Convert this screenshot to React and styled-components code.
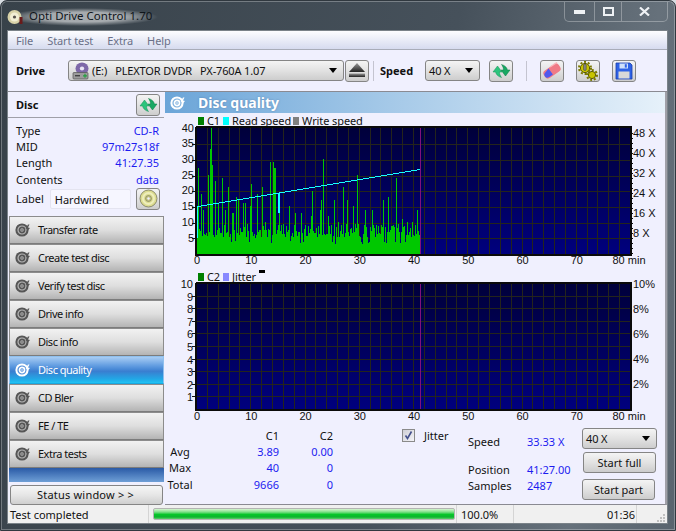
import React from "react";
import styled, { createGlobalStyle } from "styled-components";

const GlobalStyle = createGlobalStyle`
  html, body { margin: 0; padding: 0; background: #d8dde2; }
  * { box-sizing: border-box; }
  body { font-family: "Noto Sans", "Open Sans", "Liberation Sans", sans-serif; font-size: 11px; color: #111; }
`;

const BLUE = "#1c1cf0";

const Window = styled.div`
  width: 676px;
  height: 531px;
  display: flex;
  flex-direction: column;
  padding: 0 7px 6px 6px;
  overflow: hidden;
  border: 1px solid #30383f;
  border-radius: 7px 7px 0 0;
  background: linear-gradient(100deg, #38424a 0%, #46515b 60%, #66717b 86%, #59646e 100%);
  box-shadow: inset 0 0 0 1px rgba(255, 255, 255, 0.28);
`;

const TitleBar = styled.div`
  height: 29px;
  flex: none;
  display: flex;
  align-items: flex-start;
`;

const Caption = styled.div`
  margin: 7px 0 0 0;
  font-size: 11.5px;
  line-height: 16px;
  color: #10151a;
  display: flex;
  gap: 5px;
  background: radial-gradient(closest-side, rgba(255, 255, 255, 0.55) 55%, rgba(255, 255, 255, 0));
  padding: 0 6px 0 0;
`;

const CaptionGroup = styled.div`
  margin-left: auto;
  margin-right: 0;
  margin-top: 1px;
  height: 20px;
  width: 104px;
  display: flex;
  border: 1px solid rgba(255, 255, 255, 0.3);
  border-top: 0;
  border-radius: 0 0 5px 5px;
`;

const CaptionButton = styled.div`
  width: ${(p) => p.$w}px;
  display: flex;
  align-items: center;
  justify-content: center;
  border-left: ${(p) => (p.$first ? "0" : "1px solid rgba(255,255,255,.3)")};
`;

const Client = styled.div`
  flex: 1;
  display: flex;
  flex-direction: column;
  min-height: 0;
  background: #f0f0fe;
  border: 1px solid #7a8288;
`;

const MenuBar = styled.div`
  height: 19px;
  flex: none;
  display: flex;
  gap: 14px;
  padding: 0 0 0 8px;
  align-items: center;
  font-size: 11px;
  letter-spacing: -0.1px;
  color: #6a7088;
  background: linear-gradient(#fdfdff, #d6dbef);
  border-bottom: 1px solid #a8acb8;
`;

const ToolBar = styled.div`
  height: 42px;
  flex: none;
  display: flex;
  align-items: center;
  padding: 0 0 0 8px;
  border-bottom: 1px solid #8a8a92;
`;

const BoldLabel = styled.span`
  font-weight: 700;
  font-size: 11px;
  width: ${(p) => p.$w}px;
  flex: none;
`;

const comboFace = `
  background: linear-gradient(#f4f4f4, #e2e2e2 50%, #cdcdcd);
  border: 1px solid #858585;
  border-radius: 3px;
`;

const Combo = styled.div`
  ${comboFace}
  width: ${(p) => p.$w}px;
  height: ${(p) => p.$h || 21}px;
  flex: none;
  display: flex;
  align-items: center;
  gap: 2px;
  padding: 0 6px 0 3px;
  font-size: 11px;
  letter-spacing: -0.15px;
  white-space: pre;
  margin: ${(p) => p.$m || 0};
`;

const Arrow = styled.span`
  margin-left: auto;
  width: 0;
  height: 0;
  border-left: 4.5px solid transparent;
  border-right: 4.5px solid transparent;
  border-top: 5px solid #000;
`;

const ToolButton = styled.div`
  ${comboFace}
  width: 24px;
  height: 22px;
  flex: none;
  display: flex;
  align-items: center;
  justify-content: center;
  margin: ${(p) => p.$m || 0};
`;

const ToolSep = styled.div`
  width: 1px;
  height: 20px;
  flex: none;
  background: #c4c4d0;
  margin: ${(p) => p.$m};
`;

const Body = styled.div`
  flex: 1;
  min-height: 0;
  display: flex;
`;

const Sidebar = styled.div`
  width: 156px;
  flex: none;
  display: flex;
  flex-direction: column;
`;

const DiscHead = styled.div`
  height: 26px;
  flex: none;
  display: flex;
  align-items: center;
  justify-content: space-between;
  padding: 0 4px 0 8px;
  margin-bottom: 4px;
  border-bottom: 1px solid #a0a0a8;
`;

const InfoRow = styled.div`
  height: 16.4px;
  display: flex;
  align-items: center;
  justify-content: space-between;
  padding: 0 5px 0 8px;
`;

const InfoValue = styled.span`
  color: ${BLUE};
`;

const LabelRow = styled.div`
  height: 24px;
  margin-top: -1px;
  display: flex;
  align-items: center;
  padding: 0 4px 0 8px;
`;

const LabelInput = styled.div`
  width: 81px;
  height: 20px;
  margin-left: 6px;
  padding-left: 4px;
  line-height: 19px;
  background: #f6f6ff;
  border: 1px solid #e4e4f0;
  border-radius: 2px;
`;

const Nav = styled.div`
  margin: 5px 0 0 1px;
  display: flex;
  flex-direction: column;
`;

const NavItem = styled.div`
  height: 28px;
  display: flex;
  align-items: center;
  gap: 7px;
  padding-left: 5px;
  font-size: 11px;
  letter-spacing: -0.5px;
  color: ${(p) => (p.$active ? "#fff" : "#111")};
  border: 1px solid ${(p) => (p.$active ? "#8fc0ee" : "#8c8c8c")};
  border-bottom-color: ${(p) => (p.$active ? "#18a8e0" : "#7c7c7c")};
  background: ${(p) =>
    p.$active
      ? "linear-gradient(#a8cdf4, #5f9be0 35%, #3a7ed0 55%, #22a8e6 85%, #20c4f4)"
      : "linear-gradient(#f2f2f2, #dedede 50%, #b4b4b4)"};
`;

const NavStrip = styled.div`
  height: 14px;
  flex: none;
  margin-left: 1px;
  background: linear-gradient(#2a5aa6, #6f9fd6);
`;

const StatusButton = styled.div`
  ${comboFace}
  height: 20px;
  margin: 3px 1px 0 2px;
  padding-right: 2px;
  text-align: center;
  line-height: 18px;
  letter-spacing: 0.2px;
  background: linear-gradient(#f6f6f6, #e6e6e6 50%, #cfcfcf);
`;

const Main = styled.div`
  flex: 1;
  margin-left: 1px;
  min-width: 0;
  display: flex;
  flex-direction: column;
  border-bottom: 1px solid #8a8a92;
  border-right: 2px solid #a0a0a8;
`;

const PanelHead = styled.div`
  height: 21px;
  flex: none;
  display: flex;
  align-items: center;
  gap: 12px;
  padding-left: 5px;
  font-size: 14px;
  font-weight: 700;
  color: #fff;
  text-shadow: 0 0 2px rgba(60, 100, 150, 0.6);
  background: linear-gradient(90deg, #6ba5d8, #a5c9e8 45%, #e6f1fa);
`;

const Legend = styled.div`
  height: ${(p) => p.$h}px;
  flex: none;
  display: flex;
  align-items: center;
  padding: ${(p) => p.$pt || 0}px 0 0 33px;
  font-size: 11px;
  line-height: 12px;
  letter-spacing: -0.1px;
`;

const Swatch = styled.span`
  width: 6px;
  height: 8px;
  flex: none;
  margin: 0 3px 0 ${(p) => p.$gap || 0}px;
  background: ${(p) => p.$color};
`;

const Dash = styled.span`
  width: 6px;
  height: 3px;
  margin: 0 0 10px 3px;
  background: #000;
`;

const Chart = styled.svg`
  display: block;
  flex: none;
  overflow: visible;
  font-family: "Liberation Sans", Arial, sans-serif;
  font-size: 11px;
`;

const StatsRow = styled.div`
  flex: 1;
  display: flex;
`;

const StatTable = styled.div`
  width: 168px;
  flex: none;
  padding-top: 3px;
  display: grid;
  grid-template-columns: 30px 84px 54px;
  grid-template-rows: 15.5px repeat(3, 16.3px);
  align-items: center;
`;

const StatLabel = styled.span`
  text-align: center;
`;

const StatCell = styled.span`
  text-align: right;
  color: ${(p) => (p.$blue ? BLUE : "#111")};
`;

const JitterBox = styled.div`
  width: 135px;
  flex: none;
  padding: 4px 0 0 69px;
  display: flex;
  gap: 9px;
  align-items: flex-start;
  line-height: 14px;
`;

const Check = styled.span`
  width: 13px;
  height: 13px;
  flex: none;
  display: flex;
  align-items: center;
  justify-content: center;
  border: 1px solid #8a8a8a;
  background: linear-gradient(135deg, #cfcfd6, #f4f4f8);
`;

const SpeedInfo = styled.div`
  width: 114px;
  flex: none;
  padding-top: 8px;
  display: grid;
  grid-template-columns: 59px 1fr;
  grid-template-rows: 16px 12px 16px 16px;
  align-items: center;
`;

const SpeedGap = styled.div`
  grid-column: 1 / 3;
`;

const ButtonCol = styled.div`
  padding-top: 3px;
  display: flex;
  flex-direction: column;
  align-items: flex-start;
`;

const StartButton = styled.div`
  ${comboFace}
  width: ${(p) => p.$w}px;
  height: 21px;
  margin: ${(p) => p.$m};
  text-align: center;
  line-height: 19px;
`;

const StatusBar = styled.div`
  height: 18px;
  flex: none;
  display: flex;
  align-items: center;
  background: #f0f0f0;
`;

const StatusCell = styled.div`
  width: ${(p) => p.$w}px;
  flex: none;
  height: 100%;
  display: flex;
  align-items: center;
  padding: 0 1px 0 ${(p) => p.$pl || 2}px;
  justify-content: ${(p) => (p.$right ? "flex-end" : "flex-start")};
  border-right: 1px solid #d4d4d4;
`;

const Progress = styled.div`
  width: 302px;
  height: 12px;
  border: 1px solid #b4b4b4;
  border-radius: 2px;
  background: linear-gradient(#d6f5d0, #7fe08a 30%, #06c62a 55%, #0bb52e 80%, #5fcf6c);
`;

const Grip = styled.svg`
  margin-left: auto;
  margin-right: 1px;
  align-self: flex-end;
`;

// icons
const DiscIcon = ({ color = "#565656", hole = "#b8b8b8" }) => (
  <svg width="16" height="16" viewBox="0 0 16 16">
    <circle cx="7" cy="8" r="6.6" fill={color} />
    <circle cx="7" cy="8" r="4" fill="none" stroke={hole} strokeWidth="1.2" />
    <circle cx="7" cy="8" r="1.7" fill={hole} />
    <circle cx="7" cy="8" r=".8" fill={color} />
    <path d="M13 2.5l-2.5 4 2 .5-1.5 3.5 4-4.5-2-.5 1.5-3z" fill={color} />
  </svg>
);

const RefreshIcon = () => (
  <svg width="19" height="17" viewBox="0 0 19 17">
    <path d="M5.5 4L10 10H7.5c0 2 .6 3.6 2 5.5C6 14.5 4 12.5 3.6 10H1z" fill="#2cc47c" stroke="#119055" strokeWidth=".5" />
    <path d="M13.5 14L9 8h2.5c0-2-.6-3.6-2-5.5C13 3.5 15 5.5 15.4 8H18z" fill="#19a863" stroke="#0b7c45" strokeWidth=".5" />
  </svg>
);

const EjectIcon = () => (
  <svg width="18" height="15" viewBox="0 0 18 15">
    <defs>
      <linearGradient id="ej" x1="0" y1="0" x2="0" y2="1">
        <stop offset="0" stopColor="#999" />
        <stop offset="1" stopColor="#222" />
      </linearGradient>
    </defs>
    <path d="M9 0l8 9H1z" fill="url(#ej)" />
    <rect x="1" y="10.5" width="16" height="3.5" fill="url(#ej)" />
  </svg>
);

const EraserIcon = () => (
  <svg width="20" height="18" viewBox="0 0 20 18">
    <rect x="1" y="4.5" width="18" height="9" rx="3.5" transform="rotate(-35 10 9)" fill="#f07a86" />
    <path d="M6.5 6.6l4.4 6-3.6 2.5c-1.6 1.1-3.4.7-4.4-.7s-.8-3 .6-4.2z" fill="#5058ee" />
    <path d="M8 5l7-4.5" stroke="#f9b8bc" strokeWidth="1.4" />
  </svg>
);

const GearsIcon = () => (
  <svg width="21" height="20" viewBox="0 0 21 20">
    <circle cx="7" cy="7" r="4.6" fill="#c8c400" stroke="#5a5a00" strokeWidth="1" />
    <circle cx="7" cy="7" r="6" fill="none" stroke="#7a7800" strokeWidth="2" strokeDasharray="2 1.8" />
    <circle cx="14" cy="14" r="3.6" fill="#c8c400" stroke="#5a5a00" strokeWidth="1" />
    <circle cx="14" cy="14" r="5" fill="none" stroke="#7a7800" strokeWidth="2" strokeDasharray="2 1.8" />
    <rect x="5.6" y="3" width="2.6" height="6.4" rx="1" fill="#888" stroke="#333" strokeWidth=".5" />
  </svg>
);

const SaveIcon = () => (
  <svg width="18" height="18" viewBox="0 0 18 18">
    <path d="M1 1h14l2 2v14H1z" fill="#2e62e6" stroke="#1a3cab" strokeWidth=".8" />
    <rect x="4.5" y="1.5" width="8.5" height="5" fill="#cfe0fa" />
    <rect x="9.8" y="2.2" width="2" height="3.4" fill="#2e62e6" />
    <rect x="3.5" y="9.5" width="11" height="7" fill="#d8d8d8" />
  </svg>
);

const DriveIcon = () => (
  <svg width="18" height="18" viewBox="0 0 18 18">
    <ellipse cx="10" cy="6.5" rx="6.5" ry="6" fill="#7d68a8" />
    <ellipse cx="10" cy="6.5" rx="2.2" ry="2" fill="#e8e4f4" />
    <rect x="1" y="10.5" width="15" height="6.5" rx="1" fill="#9c9c9c" stroke="#555" strokeWidth=".7" />
    <path d="M11 13.8h4M13 11.8v4" stroke="#22a040" strokeWidth="1.2" />
    <rect x="3" y="13" width="5" height="1.4" fill="#444" />
  </svg>
);

const CdIcon = () => (
  <svg width="19" height="19" viewBox="0 0 19 19">
    <circle cx="9.5" cy="9.5" r="8.5" fill="#dcdc90" stroke="#77775a" strokeWidth=".8" />
    <circle cx="9.5" cy="9.5" r="5.5" fill="none" stroke="#eeeebc" strokeWidth="2" />
    <circle cx="9.5" cy="9.5" r="3" fill="#c0c080" stroke="#77775a" strokeWidth=".6" />
    <circle cx="9.5" cy="9.5" r="1.2" fill="#f0f0fe" />
  </svg>
);

const AppDisc = () => (
  <svg width="17" height="18" viewBox="0 0 17 18">
    <circle cx="7.5" cy="9" r="7" fill="#d8d2a8" />
    <circle cx="7.5" cy="9" r="4.5" fill="#f2eed4" />
    <circle cx="7.5" cy="9" r="1.6" fill="#55504a" />
    <rect x="12.5" y="9" width="3" height="7" fill="#6a1a1a" />
  </svg>
);

const CheckMark = () => (
  <svg width="11" height="11" viewBox="0 0 11 11">
    <path d="M2.5 5.5l2 3 4-7" fill="none" stroke="#44508c" strokeWidth="1.6" />
  </svg>
);

// chart data: spikes read off the run, x in run pixels, value in C1 errors
const spikes = [[100,27],[107,19],[113,14],[128,25],[134,33],[139,40],[142,28],[151,23],[160,16],[170,24],[181,14],[190,21],[200,13],[205,13],[212,18],[220,17],[233,16],[240,16],[255,15],[258,22],[275,19],[290,21],[300,10],[314,29],[323,29],[326,27],[329,27],[341,13],[372,15],[390,13],[408,13],[437,12],[440,20],[465,14],[468,17],[475,30],[490,12],[508,17],[520,10],[535,21],[545,17],[565,15],[575,25],[600,14],[620,14],[655,17],[670,18],[693,24],[710,11],[725,10],[740,10],[755,14],[765,11]];

const c1Values = (() => {
  let seed = 1337;
  const next = () => {
    seed = (seed * 1103515245 + 12345) & 0x7fffffff;
    return seed / 0x7fffffff;
  };
  const out = [];
  for (let i = 0; i < 225; i++) {
    const r = next();
    out.push(r < 0.1 ? 3 + next() : 5 + next() * 4.5);
  }
  spikes.forEach(([px, v]) => {
    const idx = Math.round(px / 3 - 31);
    if (idx >= 0 && idx < 225) out[idx] = v;
  });
  return out;
})();

const PLOT_W = 434;
const X0 = 31; // plot left inside the 500px panel
const xMin = (m) => X0 + (m * PLOT_W) / 80;

const readPoints = (() => {
  const pts = [[X0, 111], [X0 + 1, 111], [X0 + 2, 79]];
  for (let x = 3; x <= 224; x += 1) {
    const y = Math.round(79 - (x - 2) * (37 / 222));
    if (x === 82) pts.push([X0 + x, y], [X0 + x, 85], [X0 + x + 1, 85], [X0 + x + 1, y]);
    else pts.push([X0 + x, y]);
  }
  return pts.map((p) => p.join(",")).join(" ");
})();

const PlotFrame = ({ id, height, hLines, children }) => {
  const vLines = [];
  for (let m = 2; m < 80; m += 2) vLines.push(Math.round(xMin(m)) + 0.5);
  return (
    <g shapeRendering="crispEdges">
      <defs>
        <linearGradient id={id} x1="0" y1="0" x2="0" y2="1">
          <stop offset="0" stopColor="#00003a" />
          <stop offset="1" stopColor="#00007e" />
        </linearGradient>
      </defs>
      <rect x={X0} y="0" width={PLOT_W} height={height} fill={`url(#${id})`} />
      {vLines.map((x) => (
        <line key={x} x1={x} x2={x} y1="0" y2={height} stroke="#24241c" />
      ))}
      {hLines.map((y) => (
        <line key={y} x1={X0} x2={X0 + PLOT_W} y1={y} y2={y} stroke="#24241c" />
      ))}
      {children}
      <line x1={X0 + 224.5} x2={X0 + 224.5} y1="0" y2={height} stroke="#80107c" />
      <path d={`M${X0 - 0.5} 0V${height + 1}H${X0 + PLOT_W + 1}V0H${X0}`} fill="none" stroke="#0a0a0a" strokeWidth="2" />
    </g>
  );
};

const XLabels = ({ y }) => (
  <g textAnchor="middle" fill="#111">
    {[0, 10, 20, 30, 40, 50, 60, 70].map((m) => (
      <text key={m} x={xMin(m) + 1} y={y}>{m}</text>
    ))}
    <text x={xMin(80) - 1} y={y}>80 min</text>
  </g>
);

const TopChart = () => {
  const hLines = [17, 33, 49, 64, 80, 96, 111].map((y) => y + 0.5);
  const bars = c1Values.map((v, i) => `M${X0 + i + 0.5} 127V${(127 - v * 3.17).toFixed(0)}`).join("");
  const ticks = [];
  for (let y = 6; y < 127; y += 5) ticks.push(y + 0.5);
  return (
    <Chart width="500" height="143" viewBox="0 0 500 143">
      <PlotFrame id="plotA" height={127} hLines={hLines}>
        <path d={bars} stroke="#00c800" strokeWidth="1" fill="none" />
        <polyline points={readPoints} fill="none" stroke="#18ffff" strokeWidth="1" />
        {ticks.map((y) => (
          <line key={y} x1={X0 + PLOT_W} x2={X0 + PLOT_W + 3} y1={y} y2={y} stroke="#111" />
        ))}
        {hLines.map((y) => (
          <line key={y} x1={X0 - 4} x2={X0} y1={y} y2={y} stroke="#111" />
        ))}
      </PlotFrame>
      <g textAnchor="end" fill="#111">
        {[40, 35, 30, 25, 20, 15, 10, 5].map((v, i) => (
          <text key={v} x="29" y={i === 0 ? 5 : 4 + 15.85 * i}>{v}</text>
        ))}
      </g>
      <g fill="#111">
        {["48 X", "40 X", "32 X", "24 X", "16 X", "8 X"].map((t, i) => (
          <text key={t} x="468" y={10 + 20 * i}>{t}</text>
        ))}
      </g>
      <XLabels y={137} />
    </Chart>
  );
};

const BottomChart = () => {
  const hLines = [];
  for (let v = 1; v < 10; v++) hLines.push(Math.round(126 - v * 12.6) + 0.5);
  return (
    <Chart width="500" height="142" viewBox="0 0 500 142">
      <PlotFrame id="plotB" height={126} hLines={hLines}>
        {hLines.map((y) => (
          <line key={y} x1={X0 - 4} x2={X0} y1={y} y2={y} stroke="#111" />
        ))}
      </PlotFrame>
      <g textAnchor="end" fill="#111">
        {[10, 9, 8, 7, 6, 5, 4, 3, 2, 1].map((v, i) => (
          <text key={v} x="28" y={5 + 12.6 * i}>{v}</text>
        ))}
      </g>
      <g fill="#111">
        {["10%", "8%", "6%", "4%", "2%"].map((t, i) => (
          <text key={t} x="468" y={5 + 25 * i}>{t}</text>
        ))}
      </g>
      <XLabels y={137} />
    </Chart>
  );
};

const navItems = ["Transfer rate", "Create test disc", "Verify test disc", "Drive info", "Disc info", "Disc quality", "CD Bler", "FE / TE", "Extra tests"];

export default function App() {
  return (
    <>
      <GlobalStyle />
      <Window>
        <TitleBar>
          <Caption>
            <AppDisc />
            <span>Opti Drive Control 1.70</span>
          </Caption>
          <CaptionGroup>
            <CaptionButton $w={29} $first>
              <svg width="11" height="4"><rect width="11" height="4" fill="#eef1f4" /></svg>
            </CaptionButton>
            <CaptionButton $w={27}>
              <svg width="11" height="9"><rect x="1" y="1" width="9" height="7" fill="none" stroke="#eef1f4" strokeWidth="2" /></svg>
            </CaptionButton>
            <CaptionButton $w={46}>
              <svg width="11" height="9"><path d="M1 .5l9 8M10 .5l-9 8" stroke="#eef1f4" strokeWidth="2.2" /></svg>
            </CaptionButton>
          </CaptionGroup>
        </TitleBar>
        <Client>
          <MenuBar>
            <span>File</span>
            <span>Start test</span>
            <span>Extra</span>
            <span>Help</span>
          </MenuBar>
          <ToolBar>
            <BoldLabel $w={52}>Drive</BoldLabel>
            <Combo $w={276}>
              <DriveIcon />
              <span>(E:)   PLEXTOR DVDR   PX-760A 1.07</span>
              <Arrow />
            </Combo>
            <ToolButton $m="0 0 0 1px"><EjectIcon /></ToolButton>
            <ToolSep $m="0 6px 0 4px" />
            <BoldLabel $w={45}>Speed</BoldLabel>
            <Combo $w={55}>
              <span>40 X</span>
              <Arrow />
            </Combo>
            <ToolButton $m="0 0 0 9px"><RefreshIcon /></ToolButton>
            <ToolSep $m="0 13px" />
            <ToolButton><EraserIcon /></ToolButton>
            <ToolButton $m="0 0 0 12px"><GearsIcon /></ToolButton>
            <ToolButton $m="0 0 0 12px"><SaveIcon /></ToolButton>
          </ToolBar>
          <Body>
            <Sidebar>
              <DiscHead>
                <BoldLabel>Disc</BoldLabel>
                <ToolButton><RefreshIcon /></ToolButton>
              </DiscHead>
              <InfoRow><span>Type</span><InfoValue>CD-R</InfoValue></InfoRow>
              <InfoRow><span>MID</span><InfoValue>97m27s18f</InfoValue></InfoRow>
              <InfoRow><span>Length</span><InfoValue>41:27.35</InfoValue></InfoRow>
              <InfoRow><span>Contents</span><InfoValue>data</InfoValue></InfoRow>
              <LabelRow>
                <span>Label</span>
                <LabelInput>Hardwired</LabelInput>
                <ToolButton $m="0 0 0 auto"><CdIcon /></ToolButton>
              </LabelRow>
              <Nav>
                {navItems.map((item) => {
                  const active = item === "Disc quality";
                  return (
                    <NavItem key={item} $active={active}>
                      <DiscIcon color={active ? "#fff" : "#565656"} hole={active ? "#4a8ad8" : "#b8b8b8"} />
                      <span>{item}</span>
                    </NavItem>
                  );
                })}
              </Nav>
              <NavStrip />
              <StatusButton>Status window &gt; &gt;</StatusButton>
            </Sidebar>
            <Main>
              <PanelHead>
                <DiscIcon color="#fff" hole="#7aaedc" />
                <span>Disc quality</span>
              </PanelHead>
              <Legend $h={14} $pt={2}>
                <Swatch $color="#008000" />C1
                <Swatch $color="#00ffff" $gap={3} />Read speed
                <Swatch $color="#808080" $gap={2} />Write speed
              </Legend>
              <TopChart />
              <Legend $h={13}>
                <Swatch $color="#008000" />C2
                <Swatch $color="#8888ff" $gap={3} />Jitter
                <Dash />
              </Legend>
              <BottomChart />
              <StatsRow>
                <StatTable>
                  <span />
                  <StatCell>C1</StatCell>
                  <StatCell>C2</StatCell>
                  <StatLabel>Avg</StatLabel>
                  <StatCell $blue>3.89</StatCell>
                  <StatCell $blue>0.00</StatCell>
                  <StatLabel>Max</StatLabel>
                  <StatCell $blue>40</StatCell>
                  <StatCell $blue>0</StatCell>
                  <StatLabel>Total</StatLabel>
                  <StatCell $blue>9666</StatCell>
                  <StatCell $blue>0</StatCell>
                </StatTable>
                <JitterBox>
                  <Check><CheckMark /></Check>
                  <span>Jitter</span>
                </JitterBox>
                <SpeedInfo>
                  <span>Speed</span>
                  <InfoValue>33.33 X</InfoValue>
                  <SpeedGap />
                  <span>Position</span>
                  <InfoValue>41:27.00</InfoValue>
                  <span>Samples</span>
                  <InfoValue>2487</InfoValue>
                </SpeedInfo>
                <ButtonCol>
                  <Combo $w={75} $h={21}>
                    <span>40 X</span>
                    <Arrow />
                  </Combo>
                  <StartButton $w={73} $m="3px 0 0 1px">Start full</StartButton>
                  <StartButton $w={73} $m="6px 0 0 0">Start part</StartButton>
                </ButtonCol>
              </StatsRow>
            </Main>
          </Body>
          <StatusBar>
            <StatusCell $w={141}>Test completed</StatusCell>
            <StatusCell $w={308} $pl={4}><Progress /></StatusCell>
            <StatusCell $w={57} $pl={4}>100.0%</StatusCell>
            <StatusCell $w={123} $right>01:36</StatusCell>
            <Grip width="12" height="12" viewBox="0 0 12 12">
              <path d="M9 3h2v2H9zM6 6h2v2H6zM9 6h2v2H9zM3 9h2v2H3zM6 9h2v2H6zM9 9h2v2H9z" fill="#c0c0c0" />
            </Grip>
          </StatusBar>
        </Client>
      </Window>
    </>
  );
}
